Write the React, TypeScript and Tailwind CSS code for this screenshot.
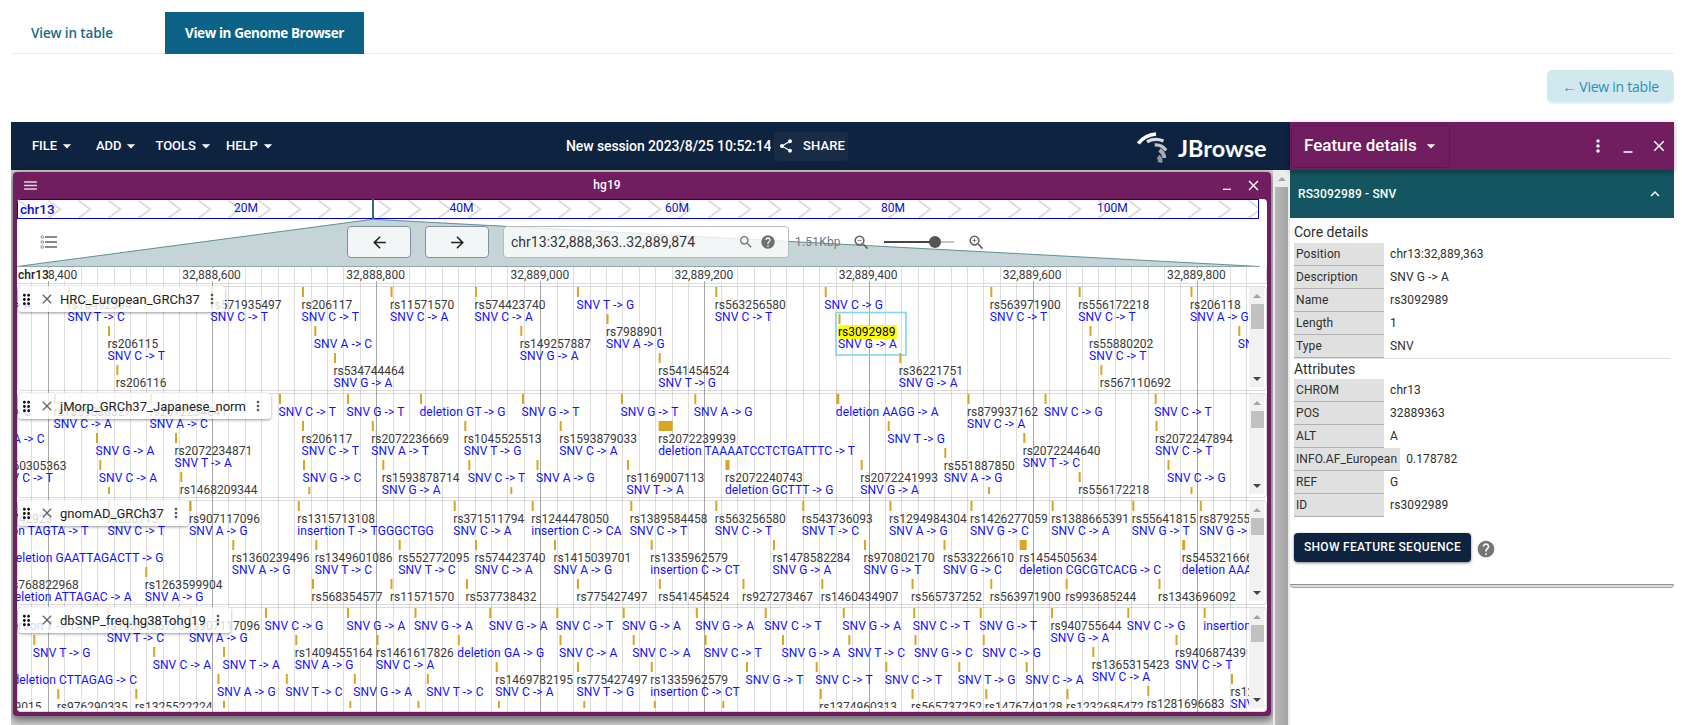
import React from "react";
import {
  MdArrowBack,
  MdArrowDropDown,
  MdArrowForward,
  MdClose,
  MdDragIndicator,
  MdExpandLess,
  MdHelp,
  MdMenu,
  MdMinimize,
  MdMoreVert,
  MdSearch,
  MdShare,
  MdZoomIn,
  MdZoomOut,
} from "react-icons/md";

// [x, row offset, name, description, glyph width]
type Feature = [number, number, string?, string?, number?];

interface Track {
  name: string;
  labelWidth: string;
  thumb: string;
  features: Feature[];
}

const tracks: Track[] = [
  {
    name: "HRC_European_GRCh37",
    labelWidth: "w-[207px]",
    thumb: "h-[25px]",
    features: [
      [-26, 0, "", "SNV C -> A"],
      [68, 0, "rs10492394", "SNV T -> C"],
      [108, 39, "rs206115", "SNV C -> T"],
      [116.3, 78, "rs206116"],
      [211, 0, "rs571935497", "SNV C -> T"],
      [302, 0, "rs206117", "SNV C -> T"],
      [314.3, 39, "", "SNV A -> C"],
      [334, 66, "rs534744464", "SNV G -> A"],
      [390.5, 0, "rs11571570", "SNV C -> A"],
      [475, 0, "rs574423740", "SNV C -> A"],
      [520.3, 39, "rs149257887", "SNV G -> A"],
      [577, 0, "", "SNV T -> G"],
      [606.5, 27, "rs7988901", "SNV A -> G"],
      [658.7, 66, "rs541454524", "SNV T -> G"],
      [715.3, 0, "rs563256580", "SNV C -> T"],
      [824.7, 0, "", "SNV C -> G"],
      [838.5, 27, "rs3092989", "SNV G -> A"],
      [899.3, 66, "rs36221751", "SNV G -> A"],
      [990.3, 0, "rs563971900", "SNV C -> T"],
      [1078.7, 0, "rs556172218", "SNV C -> T"],
      [1089.5, 39, "rs55880202", "SNV C -> T"],
      [1100.3, 78, "rs567110692"],
      [1190.5, 0, "rs206118", "SNV A -> G"],
      [1238.3, 39, "", "SNV G -> A"],
    ],
  },
  {
    name: "jMorp_GRCh37_Japanese_norm",
    labelWidth: "w-[253px]",
    thumb: "h-[17px]",
    features: [
      [-25.5, 0, "", "SNV T -> C"],
      [54, 0, "rs1359038327", "SNV C -> A"],
      [150, 0, "rs2072234641", "SNV A -> C"],
      [-13.3, 27, "", "SNV A -> C"],
      [96, 39, "", "SNV G -> A"],
      [-4, 54, "rs560305363", "SNV C -> T"],
      [99.3, 66, "", "SNV C -> A"],
      [108, 93],
      [175, 39, "rs2072234871", "SNV T -> A"],
      [180.3, 78, "rs1468209344"],
      [279, 0, "", "SNV C -> T"],
      [302, 27, "rs206117", "SNV C -> T"],
      [303, 66, "", "SNV G -> C"],
      [308.3, 93],
      [347, 0, "", "SNV G -> T"],
      [371.8, 27, "rs2072236669", "SNV A -> T"],
      [382.3, 66, "rs1593878714", "SNV G -> A"],
      [420, 0, "", "deletion GT -> G"],
      [464.3, 27, "rs1045525513", "SNV T -> G"],
      [468.3, 66, "", "SNV C -> T"],
      [510.3, 93],
      [522, 0, "", "SNV G -> T"],
      [536.5, 66, "", "SNV A -> G"],
      [559.7, 27, "rs1593879033", "SNV C -> A"],
      [621, 0, "", "SNV G -> T"],
      [627, 66, "rs1169007113", "SNV T -> A"],
      [658.7, 27, "rs2072239939", "deletion TAAAATCCTCTGATTTC -> T", 14],
      [694.3, 0, "", "SNV A -> G"],
      [725.5, 66, "rs2072240743", "deletion GCTTT -> G", 4],
      [836.3, 0, "", "deletion AAGG -> A", 3],
      [860.7, 66, "rs2072241993", "SNV G -> A"],
      [887.7, 27, "", "SNV T -> G"],
      [944.3, 54, "rs551887850", "SNV A -> G"],
      [967.5, 0, "rs879937162", "SNV C -> A"],
      [988, 93],
      [1023.3, 39, "rs2072244640", "SNV T -> C"],
      [1044.5, 0, "", "SNV C -> G"],
      [1078.7, 78, "rs556172218"],
      [1154.7, 0, "", "SNV C -> T"],
      [1155.5, 27, "rs2072247894", "SNV C -> T"],
      [1167.5, 66, "", "SNV C -> G"],
      [1190.5, 93],
    ],
  },
  {
    name: "gnomAD_GRCh37",
    labelWidth: "w-[171px]",
    thumb: "h-[17px]",
    features: [
      [-18, 0, "rs776742923", "deletion TAGTA -> T"],
      [108, 0, "rs206115", "SNV C -> T"],
      [189.5, 0, "rs907117096", "SNV A -> G"],
      [297.8, 0, "rs1315713108", "insertion T -> TGGGCTGG"],
      [9.5, 39, "", "deletion GAATTAGACTT -> G"],
      [8.4, 66, "rs768822968", "deletion ATTAGAC -> A"],
      [145.3, 66, "rs1263599904", "SNV A -> G"],
      [232.3, 39, "rs1360239496", "SNV A -> G"],
      [315.3, 39, "rs1349601086", "SNV T -> C"],
      [312, 78, "rs568354577"],
      [390.5, 78, "rs11571570"],
      [398.7, 39, "rs552772095", "SNV T -> C"],
      [453.7, 0, "rs371511794", "SNV C -> A"],
      [466, 78, "rs537738432"],
      [475, 39, "rs574423740", "SNV C -> A"],
      [531.7, 0, "rs1244478050", "insertion C -> CA"],
      [554, 39, "rs1415039701", "SNV A -> G"],
      [577, 78, "rs775427497"],
      [630.3, 0, "rs1389584458", "SNV C -> T"],
      [650.7, 39, "rs1335962579", "insertion C -> CT"],
      [658.8, 78, "rs541454524"],
      [715.3, 0, "rs563256580", "SNV C -> T"],
      [742.5, 78, "rs927273467"],
      [773, 39, "rs1478582284", "SNV G -> A"],
      [802.3, 0, "rs543736093", "SNV T -> C"],
      [821.3, 78, "rs1460434907"],
      [864, 39, "rs970802170", "SNV G -> T"],
      [889.5, 0, "rs1294984304", "SNV A -> G"],
      [911.5, 78, "rs565737252"],
      [943.5, 39, "rs533226610", "SNV G -> C"],
      [970.5, 0, "rs1426277059", "SNV G -> C"],
      [990.3, 78, "rs563971900"],
      [1019.7, 39, "rs1454505634", "deletion CGCGTCACG -> C", 7],
      [1051.7, 0, "rs1388665391", "SNV C -> A"],
      [1065.7, 78, "rs993685244"],
      [1132.3, 0, "rs55641815", "SNV G -> T"],
      [1158.5, 78, "rs1343696092"],
      [1182.2, 39, "rs545321666", "deletion AAAC -> A", 3],
      [1199.8, 0, "rs879255318", "SNV G -> A"],
    ],
  },
  {
    name: "dbSNP_freq.hg38Tohg19",
    labelWidth: "w-[213px]",
    thumb: "h-[17px]",
    features: [
      [-4, 0, "", "insertion T -> TAG"],
      [107.3, 0, "rs1038186776", "SNV T -> C"],
      [189.5, 0, "rs907117096", "SNV A -> G"],
      [265, 0, "", "SNV C -> G"],
      [33.3, 27, "", "SNV T -> G"],
      [153.2, 39, "", "SNV C -> A"],
      [223, 39, "", "SNV T -> A"],
      [13, 54, "", "deletion CTTAGAG -> C"],
      [217.5, 66, "", "SNV A -> G"],
      [-29, 81, "rs561089015"],
      [57.3, 81, "rs976290335"],
      [135.3, 81, "rs1325522224"],
      [223, 93],
      [285.8, 66, "", "SNV T -> C"],
      [295.3, 27, "rs1409455164", "SNV A -> G"],
      [347, 0, "", "SNV G -> A"],
      [349.3, 93],
      [353.8, 66, "", "SNV G -> A"],
      [376.5, 27, "rs1461617826", "SNV C -> A"],
      [414.5, 0, "", "SNV G -> A"],
      [417.5, 93],
      [426.8, 66, "", "SNV T -> C"],
      [457.8, 27, "", "deletion GA -> G"],
      [489.3, 0, "", "SNV G -> A"],
      [495.7, 54, "rs1469782195", "SNV C -> A"],
      [498, 93],
      [556.3, 0, "", "SNV C -> T"],
      [559.5, 27, "", "SNV C -> A"],
      [577, 54, "rs775427497", "SNV T -> G"],
      [583.3, 93],
      [622.7, 0, "", "SNV G -> A"],
      [632.7, 27, "", "SNV C -> A"],
      [650.7, 54, "rs1335962579", "insertion C -> CT"],
      [653.8, 93],
      [695.8, 0, "", "SNV G -> A"],
      [704.6, 27, "", "SNV C -> T"],
      [722.3, 93],
      [746, 54, "", "SNV G -> T"],
      [764.7, 0, "", "SNV C -> T"],
      [782, 27, "", "SNV G -> A"],
      [815.7, 54, "", "SNV C -> T"],
      [819.8, 81, "rs1374960313"],
      [842.8, 0, "", "SNV G -> A"],
      [848.3, 27, "", "SNV T -> C"],
      [885.3, 54, "", "SNV C -> T"],
      [911.5, 81, "rs565737252"],
      [913.3, 0, "", "SNV C -> T"],
      [914.5, 27, "", "SNV G -> C"],
      [958.3, 54, "", "SNV T -> G"],
      [979.7, 0, "", "SNV G -> T"],
      [982.7, 27, "", "SNV C -> G"],
      [985.3, 81, "rs1476749128"],
      [1025.7, 54, "", "SNV C -> A"],
      [1051, 0, "rs940755644", "SNV G -> A"],
      [1066.5, 81, "rs1232685472"],
      [1092.3, 39, "rs1365315423", "SNV C -> A"],
      [1127.3, 0, "", "SNV C -> G"],
      [1147.3, 78, "rs1281696683"],
      [1175.5, 27, "rs940687439", "SNV C -> T"],
      [1203.7, 0, "", "insertion C -> CA"],
      [1231, 66, "rs1281696", "SNV C -> T"],
    ],
  },
];

const gridLines = Array.from({ length: 75 }, (_, i) => {
  const n = i - 1;
  return { x: Math.floor(48.4 + n * 16.413), major: n % 10 === 0 };
});

function Grid({ height }: { height: number }) {
  return (
    <svg width="1232" height={height} viewBox={`17 0 1232 ${height}`} className="absolute left-0 top-0">
      {gridLines.map((g) => (
        <rect key={g.x} x={g.x} y="0" width="1" height={height} fill={g.major ? "#a8a8a8" : "#dedede"} />
      ))}
    </svg>
  );
}

function FeatureGlyph({ feature }: { feature: Feature }) {
  const [x, y, name, desc, w = 2] = feature;
  const selected = name === "rs3092989";
  const descY = y + (name ? 33.5 : 21.5);
  return (
    <g>
      {selected && (
        <>
          <rect x="836" y="25.5" width="70" height="42.5" fill="none" stroke="#82d3f8" strokeWidth="1.6" />
          <rect x="838.3" y="38" width="58.5" height="14" fill="#ffff00" />
        </>
      )}
      <rect x={x} y={y} width={w} height="10" fill="goldenrod" />
      {name && (
        <text x={x - 0.5} y={y + 21.5} fill={selected ? "#000" : "#3a3a3a"}>
          {name}
        </text>
      )}
      {desc && (
        <text x={x - 0.5} y={descY} fill="#1010ff" className="tracking-[0.1px]">
          {desc}
        </text>
      )}
    </g>
  );
}

function Triangle({ down = false }: { down?: boolean }) {
  return (
    <svg width="8" height="4" viewBox="0 0 8 4">
      <path d={down ? "M0 0h8L4 4z" : "M0 4h8L4 0z"} fill={down ? "#444" : "#a3a3a3"} />
    </svg>
  );
}

function TrackRow({ track }: { track: Track }) {
  return (
    <div className="relative mb-[2px] flex h-[105px] shrink-0 rounded pt-px shadow-[inset_0_0_0_1px_rgba(0,0,0,0.14)]">
      <svg width="1232" height="100" viewBox="17 0 1232 100" className="shrink-0 overflow-hidden text-[12px]">
        {track.features.map((f, i) => (
          <FeatureGlyph key={i} feature={f} />
        ))}
      </svg>
      <div className="flex h-[100px] w-[15px] flex-col items-center bg-[#f1f1f1]">
        <div className="flex h-[17px] items-center">
          <Triangle />
        </div>
        <div className={`w-[13px] translate-x-px bg-[#c1c1c1] ${track.thumb}`} />
        <div className="mt-auto flex h-[17px] items-center">
          <Triangle down />
        </div>
      </div>
      <div
        className={`absolute left-px top-0 flex h-[26px] items-center rounded bg-white/80 text-[#212121] shadow-[0_1px_3px_rgba(0,0,0,0.4)] ${track.labelWidth}`}
      >
        <MdDragIndicator className="size-[17px] shrink-0 text-[#111]" />
        <MdClose className="ml-[4px] size-[16px] shrink-0 text-[#666]" />
        <span className="ml-[5px] whitespace-nowrap text-[13px] leading-none tracking-[0.04px]">{track.name}</span>
        <MdMoreVert className="ml-auto mr-[5px] size-[16px] shrink-0 text-[#555]" />
      </div>
    </div>
  );
}

function Overview() {
  const labels: [number, string][] = [
    [234, "20M"],
    [449.5, "40M"],
    [665, "60M"],
    [881, "80M"],
    [1097, "100M"],
  ];
  return (
    <svg width="1250" height="68" viewBox="17 199 1250 68" className="absolute left-0 top-0">
      {Array.from({ length: 42 }, (_, i) => (
        <path
          key={i}
          d={`M${18.5 + i * 30} 200.5L${31 + i * 30 - 0.6} 209.3L${18.5 + i * 30} 218`}
          fill="none"
          stroke="#dcdcdc"
          strokeWidth="1.9"
          clipPath="url(#ovclip)"
        />
      ))}
      <clipPath id="ovclip">
        <rect x="17" y="199" width="1242" height="20" />
      </clipPath>
      <rect x="17.5" y="199.5" width="1241" height="19" fill="none" stroke="#0000c8" />
      <g fill="#1010cc" className="text-[12px]">
        {labels.map(([x, t]) => (
          <text key={t} x={x} y="212.3">
            {t}
          </text>
        ))}
        <text x="20" y="213.7" className="text-[13.5px] font-medium">
          chr13
        </text>
      </g>
      <path d="M373 219L17 266.5H1260Z" fill="#c5d4d7" />
      <path d="M17 266.5L373 219.3L1260 266.5" fill="none" stroke="#5f9297" />
      <rect x="17" y="266" width="1243" height="1" fill="#8fa9ab" />
      <rect x="372" y="199" width="2" height="20" fill="#2f6f78" />
    </svg>
  );
}

function Ruler() {
  const labels = Array.from({ length: 7 }, (_, i) => ({
    x: 212.2 + i * 164.13,
    t: (32888600 + i * 200).toLocaleString("en-US"),
  }));
  return (
    <div className="relative h-[17px] shrink-0 shadow-[inset_-1px_-1px_0_rgba(0,0,0,0.14)]">
      <Grid height={17} />
      <svg width="1250" height="17" viewBox="17 267 1250 17" className="absolute left-0 top-0 text-[12px]">
        <rect x="17" y="268" width="60" height="13" fill="#fff" />
        <text x="48" y="279" fill="#3a3a3a">
          8,400
        </text>
        <text x="18" y="278.5" fill="#222" className="text-[12px] font-medium">
          chr13
        </text>
        {labels.map((l) => (
          <g key={l.t}>
            <rect x={l.x - 30.5} y="268" width="60" height="13" fill="#fff" />
            <text x={l.x - 30} y="279" fill="#3a3a3a">
              {l.t}
            </text>
          </g>
        ))}
      </svg>
    </div>
  );
}

function NavControls() {
  return (
    <div className="relative flex h-[68px] items-center pt-[18px] text-[#666]">
      <svg width="18" height="15" viewBox="0 0 18 15" className="ml-[23px] shrink-0">
        <g fill="none" stroke="#8a8a8a">
          <circle cx="2.3" cy="2" r="1.3" />
          <circle cx="2.3" cy="7" r="1.3" />
          <circle cx="2.3" cy="12" r="1.3" />
          <path d="M5 2h12M5 7h12M5 12h12" strokeWidth="2" />
        </g>
      </svg>
      <button className="ml-[289px] flex h-8 w-16 items-center justify-center rounded border border-[#8290a3] bg-white/80 text-[#222]">
        <MdArrowBack className="size-[19px]" />
      </button>
      <button className="ml-[14px] flex h-8 w-16 items-center justify-center rounded border border-[#8290a3] bg-white/80 text-[#222]">
        <MdArrowForward className="size-[19px]" />
      </button>
      <div className="ml-[14px] flex h-8 w-[286px] items-center rounded border border-[#b8bcbd] bg-white/80 pl-[7px] text-[#333]">
        <span className="text-[14px] tracking-[0.03px]">chr13:32,888,363..32,889,874</span>
        <MdSearch className="ml-auto size-4 text-[#757575]" />
        <MdHelp className="ml-[6px] mr-[12px] size-4 text-[#707070]" />
      </div>
      <span className="ml-[6px] w-[45px] whitespace-nowrap text-[12px] tracking-[0.2px] text-[#6f7a7b]">1.51Kbp</span>
      <MdZoomOut className="ml-[12px] size-[19px]" />
      <svg width="70" height="14" viewBox="0 0 70 14" className="ml-[13px]">
        <rect x="0" y="6" width="70" height="2" fill="#c4c4c4" />
        <rect x="0" y="6" width="51" height="2" fill="#444" />
        <circle cx="51" cy="7" r="6" fill="#555" />
      </svg>
      <MdZoomIn className="ml-[13px] size-[19px]" />
    </div>
  );
}

function Logo() {
  return (
    <svg width="134" height="40" viewBox="0 0 134 40">
      <g fill="none">
        <path d="M2.3 14.5Q8.500 6 20 5" stroke="#fff" strokeWidth="3.700" />
        <path d="M11 12.700Q19 8.500 27.500 12" stroke="#dcdce0" strokeWidth="3.300" />
        <path d="M18.700 16Q26 15.500 30 21.500" stroke="#c4c4c8" strokeWidth="3.300" />
        <path d="M23.500 21Q28 24 28.300 29" stroke="#aaadb3" strokeWidth="4" />
        <path d="M22 27.500Q25 29.500 24 33.500" stroke="#8d929b" strokeWidth="4.500" />
      </g>
      <text x="42" y="27.500" fill="#fff" textLength="88.500" lengthAdjust="spacingAndGlyphs" className="font-['Lato'] text-[23px] font-bold">
        JBrowse
      </text>
    </svg>
  );
}

function Header() {
  const menus: [string, string][] = [
    ["FILE", "w-[64px]"],
    ["ADD", "w-[59.5px]"],
    ["TOOLS", "w-[70.5px]"],
    ["HELP", "w-[60px]"],
  ];
  return (
    <div className="flex h-12 shrink-0 items-center bg-[#0d233f] text-white">
      <div className="flex w-[535px] pl-[21px]">
        {menus.map(([m, w]) => (
          <div key={m} className={`flex items-center text-[13px] font-medium tracking-[-0.05px] ${w}`}>
            {m}
            <MdArrowDropDown className="size-5 shrink-0" />
          </div>
        ))}
      </div>
      <div className="ml-[20px] w-[205px] overflow-hidden whitespace-nowrap text-[14px] font-medium tracking-[-0.1px]">
        New session 2023/8/25 10:52:14
      </div>
      <div className="ml-[3px] flex h-[29px] w-[74px] items-center rounded bg-[#182c47] text-[13px] font-medium">
        <MdShare className="ml-1 size-4" />
        <span className="ml-[9px] tracking-[0.1px]">SHARE</span>
      </div>
      <div className="ml-[288px] mt-[5px]">
        <Logo />
      </div>
    </div>
  );
}

function GenomeView() {
  return (
    <div className="ml-[2px] mt-[2px] flex h-[544px] w-[1258px] shrink-0 flex-col rounded bg-[#711e60] px-1 pb-1 shadow-[0_3px_8px_2px_rgba(0,0,0,0.5)]">
      <div className="relative flex h-[27px] shrink-0 items-center justify-center text-[12px] font-medium text-white">
        <span className="mt-[-2px] ml-[-70px] tracking-[0.1px]">hg19</span>
        <MdMenu className="absolute left-[5px] top-[5px] size-[17px] text-white/80" />
        <MdMinimize className="absolute right-[32px] top-[4px] size-[16px]" />
        <MdClose className="absolute right-[5px] top-[5px] size-[17px]" />
      </div>
      <div className="flex h-[513px] flex-col overflow-hidden rounded bg-white">
        <div className="relative shrink-0">
          <Overview />
          <NavControls />
        </div>
        <Ruler />
        <div className="relative flex flex-col pt-[2px]">
          <Grid height={429} />
          {tracks.map((t) => (
            <TrackRow key={t.name} track={t} />
          ))}
        </div>
      </div>
    </div>
  );
}

function DetailRows({ rows }: { rows: [string, string][] }) {
  return (
    <div className="flex flex-col">
      {rows.map(([k, v]) => (
        <div key={k} className="flex h-[23px]">
          <div className="min-w-[90px] border-b border-[#b0b0b0] bg-[#e0e0e0] pl-[2px] pr-[3px] pt-[3px] text-[12px] leading-4 tracking-[0.1px]">{k}</div>
          <div className="ml-[6px] pt-[3px] text-[12px] leading-4 tracking-[0.1px]">{v}</div>
        </div>
      ))}
    </div>
  );
}

function FeaturePanel() {
  return (
    <div className="flex h-[603px] w-[384px] shrink-0 flex-col bg-white text-[#2e2e2e]">
      <div className="relative z-10 flex h-12 shrink-0 items-center bg-[#711e60] text-white shadow-[0_2px_5px_rgba(0,0,0,0.35)]">
        <div className="ml-px flex h-[43px] w-[159px] items-center rounded border border-[#5c184e] pl-[12px] text-[17px] font-medium">
          Feature details
          <MdArrowDropDown className="ml-[4px] size-[20px]" />
        </div>
        <MdMoreVert className="ml-auto size-[20px]" />
        <MdMinimize className="ml-[11px] mt-[-1px] size-[18px]" />
        <MdClose className="ml-[13px] mr-[6px] size-[18px]" />
      </div>
      <div className="flex h-12 shrink-0 items-center bg-[#135560] pl-2 pr-[10px] text-[12px] font-medium text-white">
        <span className="tracking-[0.15px]">RS3092989 - SNV</span>
        <MdExpandLess className="ml-auto size-[18px]" />
      </div>
      <div className="flex flex-col pl-1 pt-[5px]">
        <div className="h-5 text-[14px] leading-[18px]">Core details</div>
        <DetailRows
          rows={[
            ["Position", "chr13:32,889,363"],
            ["Description", "SNV G -> A"],
            ["Name", "rs3092989"],
            ["Length", "1"],
            ["Type", "SNV"],
          ]}
        />
        <div className="mr-1 h-px bg-[#dedede]" />
        <div className="h-5 text-[14px] leading-5">Attributes</div>
        <DetailRows
          rows={[
            ["CHROM", "chr13"],
            ["POS", "32889363"],
            ["ALT", "A"],
            ["INFO.AF_European", "0.178782"],
            ["REF", "G"],
            ["ID", "rs3092989"],
          ]}
        />
        <div className="mt-4 flex items-center">
          <button className="h-[29px] w-[177px] rounded bg-[#0d233f] pb-[2px] text-[12px] font-medium tracking-[0.3px] text-white shadow-[0_1px_3px_rgba(0,0,0,0.5)]">
            SHOW FEATURE SEQUENCE
          </button>
          <MdHelp className="ml-[5px] mt-[2px] size-5 text-[#757575]" />
        </div>
      </div>
      <div className="mt-[22px] h-[4px] shrink-0 rounded-b border border-t-[#8c9490] border-[#a5a5a5] bg-[#dcdcdc]" />
    </div>
  );
}

export default function App() {
  return (
    <div className="flex h-[725px] w-[1682px] flex-col overflow-hidden bg-white pl-[11px] pr-2 font-['Roboto',sans-serif]">
      <div className="flex h-[54px] shrink-0 items-end border-b border-[#eeeeee] font-['Open_Sans',sans-serif] text-[14px] font-semibold">
        <div className="flex h-[42px] w-[154px] items-center pl-5 text-[#1c6a8b]">
          <span className="mt-[2px] text-[13.5px] tracking-[-0.12px]">View in table</span>
        </div>
        <div className="relative top-px flex h-[42px] w-[199px] items-center justify-center bg-[#0c6186] font-bold text-white">
          <span className="whitespace-nowrap text-[13.5px] tracking-[-0.42px]">View in Genome Browser</span>
        </div>
      </div>
      <div className="flex h-[68px] shrink-0 items-start justify-end pt-4">
        <button className="h-8 w-[127px] rounded-[5px] bg-[#d1e8ee] font-['Open_Sans',sans-serif] text-[14px] tracking-[-0.25px] text-[#2c8fb4] shadow-[0_2px_0_#e6f3fb]">
          ← View in table
        </button>
      </div>
      <div className="flex">
        <div className="flex h-[603px] w-[1279px] flex-col overflow-hidden bg-[#dadada]">
          <Header />
          <div className="flex">
            <GenomeView />
            <div className="relative ml-[2px] flex h-[555px] w-[17px] flex-col items-center bg-[#ececec]">
              <div className="flex h-[17px] items-center pt-px">
                <Triangle />
              </div>
              <div className="w-[13px] flex-1 bg-gradient-to-r from-[#b8b8b8] to-[#a3a3a3]" />
            </div>
          </div>
        </div>
        <FeaturePanel />
      </div>
    </div>
  );
}
